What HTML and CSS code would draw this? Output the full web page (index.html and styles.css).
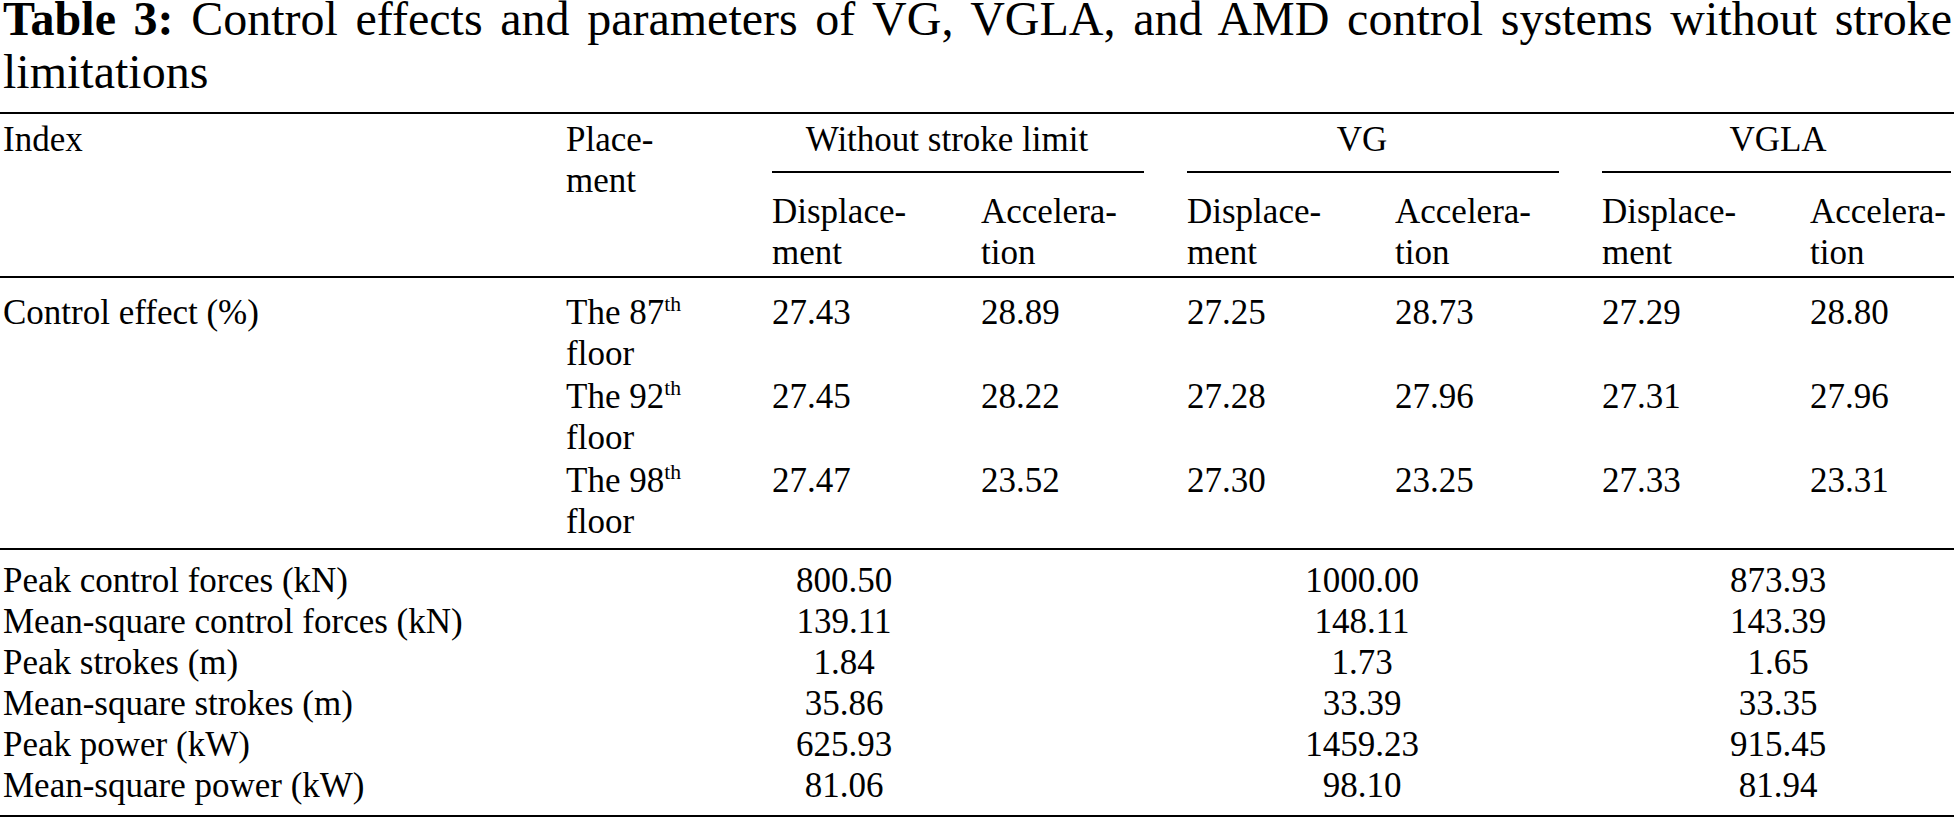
FILE: index.html
```html
<!DOCTYPE html>
<html lang="en">
<head>
<meta charset="utf-8">
<title>Table 3</title>
<link rel="stylesheet" href="styles.css">
</head>
<body>
<div class="page">
  <p class="caption"><b>Table 3:</b> Control effects and parameters of VG, VGLA, and AMD control systems without stroke limitations</p>
  <table class="data">
    <colgroup>
      <col class="w-index">
      <col class="w-place">
      <col class="w-c3">
      <col class="w-c4">
      <col class="w-c5">
      <col class="w-c6">
      <col class="w-c7">
      <col class="w-c8">
    </colgroup>
    <thead>
      <tr class="hrow1">
        <th class="first" rowspan="2">Index</th>
        <th rowspan="2">Place-<br>ment</th>
        <th colspan="2" class="grp"><div class="grp-title">Without stroke limit</div><div class="grp-rule"></div></th>
        <th colspan="2" class="grp"><div class="grp-title">VG</div><div class="grp-rule"></div></th>
        <th colspan="2" class="grp last"><div class="grp-title">VGLA</div><div class="grp-rule rule-end"></div></th>
      </tr>
      <tr class="hrow2">
        <th>Displace-<br>ment</th>
        <th>Accelera-<br>tion</th>
        <th>Displace-<br>ment</th>
        <th>Accelera-<br>tion</th>
        <th>Displace-<br>ment</th>
        <th class="last">Accelera-<br>tion</th>
      </tr>
    </thead>
    <tbody class="effects">
      <tr class="r-first">
        <td class="first">Control effect (%)</td>
        <td>The 87<sup>th</sup><br>floor</td>
        <td>27.43</td><td>28.89</td><td>27.25</td><td>28.73</td><td>27.29</td><td class="last">28.80</td>
      </tr>
      <tr>
        <td class="first"></td>
        <td>The 92<sup>th</sup><br>floor</td>
        <td>27.45</td><td>28.22</td><td>27.28</td><td>27.96</td><td>27.31</td><td class="last">27.96</td>
      </tr>
      <tr class="r-last">
        <td class="first"></td>
        <td>The 98<sup>th</sup><br>floor</td>
        <td>27.47</td><td>23.52</td><td>27.30</td><td>23.25</td><td>27.33</td><td class="last">23.31</td>
      </tr>
    </tbody>
    <tbody class="params">
      <tr class="r-first">
        <td class="first">Peak control forces (kN)</td>
        <td colspan="3" class="num">800.50</td>
        <td colspan="2" class="num">1000.00</td>
        <td colspan="2" class="num last">873.93</td>
      </tr>
      <tr>
        <td class="first">Mean-square control forces (kN)</td>
        <td colspan="3" class="num">139.11</td>
        <td colspan="2" class="num">148.11</td>
        <td colspan="2" class="num last">143.39</td>
      </tr>
      <tr>
        <td class="first">Peak strokes (m)</td>
        <td colspan="3" class="num">1.84</td>
        <td colspan="2" class="num">1.73</td>
        <td colspan="2" class="num last">1.65</td>
      </tr>
      <tr>
        <td class="first">Mean-square strokes (m)</td>
        <td colspan="3" class="num">35.86</td>
        <td colspan="2" class="num">33.39</td>
        <td colspan="2" class="num last">33.35</td>
      </tr>
      <tr>
        <td class="first">Peak power (kW)</td>
        <td colspan="3" class="num">625.93</td>
        <td colspan="2" class="num">1459.23</td>
        <td colspan="2" class="num last">915.45</td>
      </tr>
      <tr class="r-last">
        <td class="first">Mean-square power (kW)</td>
        <td colspan="3" class="num">81.06</td>
        <td colspan="2" class="num">98.10</td>
        <td colspan="2" class="num last">81.94</td>
      </tr>
    </tbody>
  </table>
</div>
</body>
</html>
```

FILE: styles.css
```css
html, body {
  margin: 0;
  padding: 0;
  background: #ffffff;
}

body {
  font-family: "Liberation Serif", "Times New Roman", serif;
  color: #000000;
  width: 1954px;
  overflow: hidden;
}

.page {
  width: 1954px;
}

.caption {
  margin: -8px 0 14px 0;
  padding: 0 2px 0 3px;
  font-size: 48px;
  line-height: 53px;
  text-align: justify;
}

.caption b {
  font-weight: bold;
}

.data {
  width: 1954px;
  table-layout: fixed;
  border-collapse: collapse;
  font-size: 35px;
  line-height: 41px;
  border-top: 2px solid #000;
  border-bottom: 2px solid #000;
}

.w-index { width: 566px; }
.w-place { width: 206px; }
.w-c3 { width: 209px; }
.w-c4 { width: 206px; }
.w-c5 { width: 208px; }
.w-c6 { width: 207px; }
.w-c7 { width: 208px; }
.w-c8 { width: 144px; }

.data th,
.data td {
  font-weight: normal;
  text-align: left;
  vertical-align: top;
  padding: 0 65px 0 0;
  white-space: nowrap;
}

.data .first {
  padding-left: 3px;
}

.data .last {
  padding-right: 0;
}

.data thead {
  border-bottom: 2px solid #000;
}

.hrow1 th {
  padding-top: 5px;
}

.hrow2 th {
  padding-top: 18px;
  padding-bottom: 3px;
}

.grp .grp-title {
  text-align: center;
}

.grp-rule {
  margin: 11px -22px 0 0;
  border-top: 2px solid #000;
}

.grp-rule.rule-end {
  margin-right: 3px;
}

.effects {
  border-bottom: 2px solid #000;
}

.effects td {
  padding-bottom: 2px;
}

.effects .r-first td {
  padding-top: 14px;
}

.effects .r-last td {
  padding-bottom: 6px;
}

.params .r-first td {
  padding-top: 10px;
}

.params .r-last td {
  padding-bottom: 9px;
}

.data td.num {
  text-align: center;
}

sup {
  font-size: 0.62em;
  line-height: 0;
  vertical-align: 0.62em;
}
```
